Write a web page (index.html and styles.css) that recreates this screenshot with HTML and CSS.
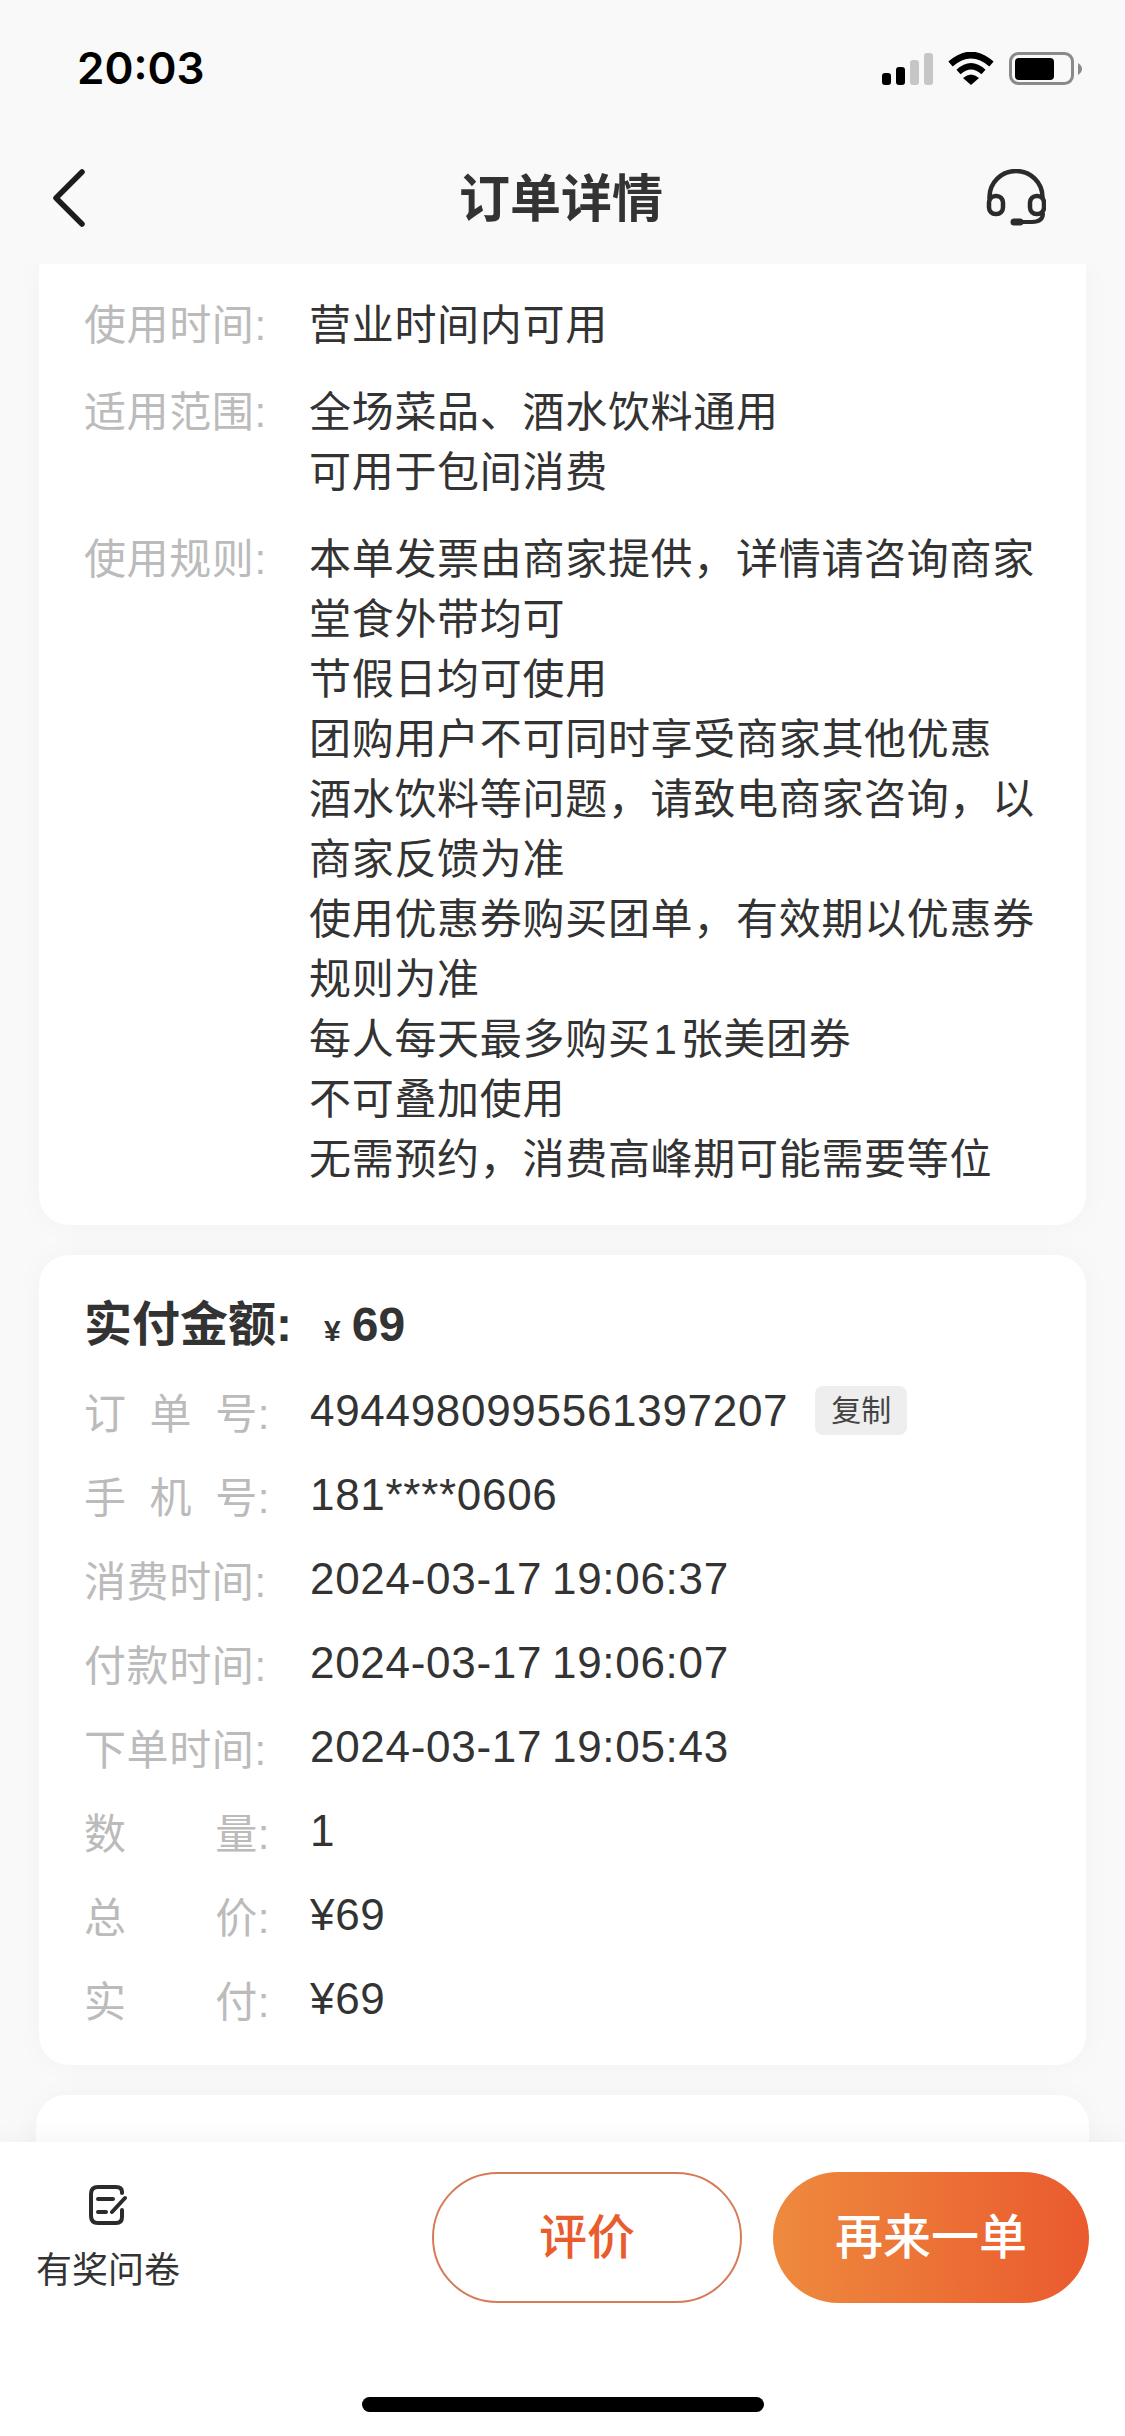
FILE: index.html
```html
<!DOCTYPE html>
<html lang="zh-CN">
<head>
    <meta charset="UTF-8">
    <meta name="viewport" content="width=device-width, initial-scale=1.0">
    <title>订单详情</title>
    <link rel="stylesheet" href="styles.css">
</head>
<body>
    <div class="page">
        <div class="status-bar">
            <span class="status-time">20:03</span>
            <div class="status-icons">
                <svg class="icon-signal" width="51" height="33" viewBox="0 0 51 33">
                    <rect x="0" y="21" width="9" height="12" rx="3" fill="#000"/>
                    <rect x="14" y="15" width="9" height="18" rx="3" fill="#000"/>
                    <rect x="28" y="8" width="9" height="25" rx="3" fill="#c6c6c6"/>
                    <rect x="42" y="1" width="9" height="32" rx="3" fill="#c6c6c6"/>
                </svg>
                <svg class="icon-wifi" width="46" height="33" viewBox="0 0 46 33">
                    <path d="M2.5 12 Q23 -6 43.5 12" fill="none" stroke="#000" stroke-width="6.5"/>
                    <path d="M10.5 20 Q23 8.500 35.500 20" fill="none" stroke="#000" stroke-width="6"/>
                    <path d="M15 26 Q23 19 31 26 L23 33 Z" fill="#000"/>
                </svg>
                <svg class="icon-battery" width="73" height="33" viewBox="0 0 73 33">
                    <rect x="1.500" y="1.500" width="62" height="30" rx="8" fill="none" stroke="#8a8a8a" stroke-width="3"/>
                    <rect x="6" y="6" width="39" height="22" rx="4" fill="#000"/>
                    <path d="M69 11 C72 13 73 15 73 17 C73 19 72 21 69 23 Z" fill="#8a8a8a"/>
                </svg>
            </div>
        </div>

        <div class="nav-bar">
            <svg class="icon-back" width="32" height="58" viewBox="0 0 32 58">
                <path d="M29 3 L3 29 L29 55" fill="none" stroke="#1c1c1c" stroke-width="5.500" stroke-linecap="round" stroke-linejoin="round"/>
            </svg>
            <h1 class="nav-title">订单详情</h1>
            <svg class="icon-service" width="60" height="58" viewBox="0 0 60 58">
                <path d="M3.500 30 V28 a26.500 26 0 0 1 53 0 V30" fill="none" stroke="#2b2b2b" stroke-width="4.500"/>
                <rect x="3" y="27" width="14" height="18" rx="6.500" fill="none" stroke="#2b2b2b" stroke-width="4.500"/>
                <rect x="44" y="27" width="14" height="18" rx="6.500" fill="none" stroke="#2b2b2b" stroke-width="4.500"/>
                <path d="M57 44 C57 50 53 53 46 53 H32" fill="none" stroke="#2b2b2b" stroke-width="4"/>
                <path d="M28 53 H34" fill="none" stroke="#2b2b2b" stroke-width="7" stroke-linecap="round"/>
            </svg>
        </div>

        <div class="content">
            <section class="card card-rules">
                <div class="rule-row">
                    <span class="rule-label">使用时间:</span>
                    <div class="rule-value">营业时间内可用</div>
                </div>
                <div class="rule-row">
                    <span class="rule-label">适用范围:</span>
                    <div class="rule-value">
                        <div>全场菜品、酒水饮料通用</div>
                        <div>可用于包间消费</div>
                    </div>
                </div>
                <div class="rule-row">
                    <span class="rule-label">使用规则:</span>
                    <div class="rule-value">
                        <div>本单发票由商家提供，详情请咨询商家</div>
                        <div>堂食外带均可</div>
                        <div>节假日均可使用</div>
                        <div>团购用户不可同时享受商家其他优惠</div>
                        <div>酒水饮料等问题，请致电商家咨询，以商家反馈为准</div>
                        <div>使用优惠券购买团单，有效期以优惠券规则为准</div>
                        <div>每人每天最多购买<span class="num">1</span>张美团券</div>
                        <div>不可叠加使用</div>
                        <div>无需预约，消费高峰期可能需要等位</div>
                    </div>
                </div>
            </section>

            <section class="card card-order">
                <div class="order-total">实付金额:<span class="total-yen">¥</span><span class="total-price">69</span></div>
                <div class="order-row">
                    <div class="order-label"><span>订</span><span>单</span><span>号:</span></div>
                    <span class="order-value">4944980995561397207</span>
                    <span class="copy-tag">复制</span>
                </div>
                <div class="order-row">
                    <div class="order-label"><span>手</span><span>机</span><span>号:</span></div>
                    <span class="order-value">181****0606</span>
                </div>
                <div class="order-row">
                    <div class="order-label"><span>消费时间:</span></div>
                    <span class="order-value">2024-03-17 19:06:37</span>
                </div>
                <div class="order-row">
                    <div class="order-label"><span>付款时间:</span></div>
                    <span class="order-value">2024-03-17 19:06:07</span>
                </div>
                <div class="order-row">
                    <div class="order-label"><span>下单时间:</span></div>
                    <span class="order-value">2024-03-17 19:05:43</span>
                </div>
                <div class="order-row">
                    <div class="order-label"><span>数</span><span>量:</span></div>
                    <span class="order-value">1</span>
                </div>
                <div class="order-row">
                    <div class="order-label"><span>总</span><span>价:</span></div>
                    <span class="order-value">¥69</span>
                </div>
                <div class="order-row">
                    <div class="order-label"><span>实</span><span>付:</span></div>
                    <span class="order-value">¥69</span>
                </div>
            </section>

            <section class="card card-next"></section>
        </div>

        <div class="footer">
            <div class="footer-actions">
                <div class="survey">
                    <svg class="icon-survey" width="38" height="40" viewBox="0 0 38 40">
                        <path d="M33 8 V7 Q33 2 27 2 H9 Q2 2 2 9 V31 Q2 38 9 38 H27 Q33 38 33 32 V25" fill="none" stroke="#2b2b2b" stroke-width="4" stroke-linecap="round"/>
                        <path d="M9 14 H24 M9 27 H17 M36 13 L23 27" fill="none" stroke="#2b2b2b" stroke-width="4" stroke-linecap="round"/>
                    </svg>
                    <span class="survey-label">有奖问卷</span>
                </div>
                <div class="buttons">
                    <button type="button" class="btn btn-outline">评价</button>
                    <button type="button" class="btn btn-fill">再来一单</button>
                </div>
            </div>
            <div class="home-bar"></div>
        </div>
    </div>
</body>
</html>
```

FILE: styles.css
```css
/* Phone sized page: fixed header, clipped scroll area, fixed footer */
* {
    box-sizing: border-box;
}

body {
    margin: 0;
    font-family: "Liberation Sans", "Noto Sans CJK SC", sans-serif;
    color: #333;
    background-color: #f9f9f9;
}

.page {
    display: flex;
    flex-direction: column;
    width: 1125px;
    height: 2436px;
    overflow: hidden;
}

.status-bar {
    display: flex;
    justify-content: space-between;
    align-items: flex-start;
    flex: none;
    height: 132px;
    padding: 52px 43px 0 77px;
}

.status-time {
    font-family: Inter, "Liberation Sans", sans-serif;
    font-size: 44px;
    font-weight: 600;
    line-height: 33px;
    color: #000;
}

.status-icons {
    display: flex;
    align-items: center;
    gap: 15px;
}

.nav-bar {
    display: grid;
    grid-template-columns: 1fr auto 1fr;
    align-items: center;
    flex: none;
    height: 132px;
    padding: 0 56px 0 53px;
}

.nav-title {
    margin: 0 0 6px;
    font-size: 51px;
    font-weight: 700;
    color: #333;
}

.icon-service {
    justify-self: end;
    margin-right: 23px;
}

.content {
    flex: 1;
    min-height: 0;
    overflow: hidden;
    padding: 0 39px;
}

.card {
    background-color: #fff;
    border-radius: 30px;
    box-shadow: 0 0 30px rgba(0, 0, 0, 0.03);
    margin-bottom: 30px;
}

.card-rules {
    padding: 32px 30px 35px 45px;
    border-radius: 0 0 30px 30px;
}

.rule-row {
    display: flex;
    margin-bottom: 27px;
    font-size: 42px;
    line-height: 60px;
}

.rule-row:last-child {
    margin-bottom: 0;
}

.rule-label {
    flex: none;
    width: 225px;
    color: #bbb;
    letter-spacing: 0.6px;
}

.rule-value {
    width: 740px;
    letter-spacing: 0.7px;
}

.num {
    padding: 0 3px;
}

.card-order {
    padding: 40px 30px 37px 45px;
}

.order-total {
    display: flex;
    align-items: baseline;
    margin-bottom: 19px;
    font-size: 48px;
    font-weight: 700;
    line-height: 60px;
}

.total-yen {
    margin-left: 32px;
    font-size: 30px;
}

.total-price {
    margin-left: 11px;
}

.order-row {
    display: flex;
    align-items: center;
    height: 60px;
    margin-bottom: 24px;
    font-size: 42px;
}

.order-row:last-child {
    margin-bottom: 0;
}

.order-label {
    display: flex;
    justify-content: space-between;
    flex: none;
    width: 186px;
    margin-right: 40px;
    color: #bbb;
    letter-spacing: 0.6px;
}

.order-value {
    padding-top: 2px;
    font-size: 44px;
    letter-spacing: 0.7px;
    word-spacing: -3px;
}

.copy-tag {
    margin-left: 27px;
    padding: 0 16px;
    height: 49px;
    line-height: 49px;
    font-size: 30px;
    color: #444;
    background-color: #eee;
    border-radius: 8px;
}

.card-next {
    width: 1053px;
    height: 300px;
    margin-left: -3px;
}

.footer {
    position: relative;
    flex: none;
    display: flex;
    flex-direction: column;
    height: 294px;
    background-color: #fff;
    box-shadow: 0 -6px 24px rgba(0, 0, 0, 0.035);
}

.footer-actions {
    display: flex;
    justify-content: space-between;
    padding: 30px 36px 0 36px;
}

.survey {
    display: flex;
    flex-direction: column;
    align-items: center;
    padding-top: 13px;
}

.survey-label {
    margin-top: 21px;
    font-size: 36px;
    line-height: 50px;
}

.buttons {
    display: flex;
    gap: 31px;
}

.btn {
    height: 131px;
    padding: 0 0 10px;
    font-family: inherit;
    font-size: 48px;
    font-weight: 500;
    border-radius: 66px;
}

.btn-outline {
    width: 310px;
    color: #e95c2e;
    background-color: #fff;
    border: 2px solid #d67a5a;
}

.btn-fill {
    width: 316px;
    color: #fff;
    background: linear-gradient(90deg, #ee8a3e, #ea5a2e);
    border: none;
}

.home-bar {
    width: 402px;
    height: 15px;
    margin: 94px auto 0;
    background-color: #000;
    border-radius: 8px;
}
```
